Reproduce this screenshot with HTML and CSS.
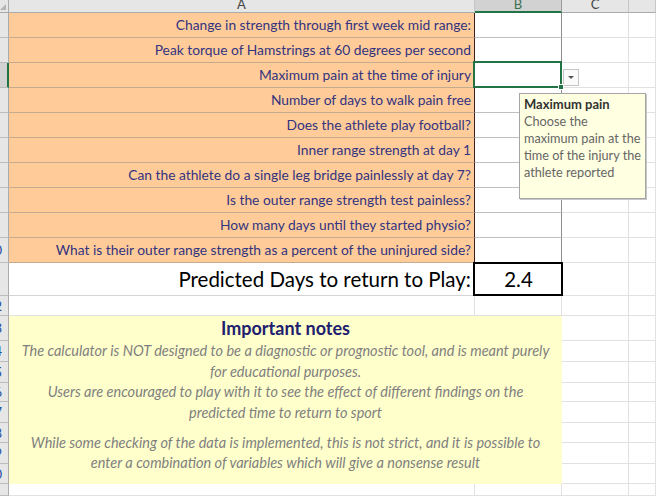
FILE: index.html
```html
<!DOCTYPE html>
<html>
<head>
<meta charset="utf-8">
<link rel="stylesheet" href="styles.css">
</head>
<body>
<div class="sheet">
  <div class="corner"></div>
  <div class="ch">A</div><div class="ch ch-sel">B</div><div class="ch">C</div><div class="ch"></div>

  <div class="rh"></div><div class="q">Change in strength through first week mid range:</div><div class="in"></div><div class="g"></div><div class="g"></div>
  <div class="rh"></div><div class="q">Peak torque of Hamstrings at 60 degrees per second</div><div class="in"></div><div class="g"></div><div class="g"></div>
  <div class="rh rh-sel"></div><div class="q">Maximum pain at the time of injury</div><div class="in active"><span class="dd"></span></div><div class="g"></div><div class="g"></div>
  <div class="rh"></div><div class="q">Number of days to walk pain free</div><div class="in"></div><div class="g"></div><div class="g"></div>
  <div class="rh"></div><div class="q">Does the athlete play football?</div><div class="in"></div><div class="g"></div><div class="g"></div>
  <div class="rh"></div><div class="q">Inner range strength at day 1</div><div class="in"></div><div class="g"></div><div class="g"></div>
  <div class="rh"></div><div class="q">Can the athlete do a single leg bridge painlessly at day 7?</div><div class="in"></div><div class="g"></div><div class="g"></div>
  <div class="rh"></div><div class="q">Is the outer range strength test painless?</div><div class="in"></div><div class="g"></div><div class="g"></div>
  <div class="rh"></div><div class="q">How many days until they started physio?</div><div class="in"></div><div class="g"></div><div class="g"></div>
  <div class="rh"><span class="n">10</span></div><div class="q">What is their outer range strength as a percent of the uninjured side?</div><div class="in"></div><div class="g"></div><div class="g"></div>

  <div class="rh"></div><div class="pred">Predicted Days to return to Play:</div><div class="res">2.4</div><div class="g"></div><div class="g"></div>
  <div class="rh"><span class="n">12</span></div><div class="g"></div><div class="g"></div><div class="g"></div><div class="g"></div>

  <div class="rh"><span class="n">13</span></div>
  <div class="notes">
    <div class="notes-title">Important notes</div>
    <p>The calculator is NOT designed to be a diagnostic or prognostic tool, and is meant purely<br>for educational purposes.</p>
    <p>Users are encouraged to play with it to see the effect of different findings on the<br>predicted time to return to sport</p>
    <p class="gap">While some checking of the data is implemented, this is not strict, and it is possible to<br>enter a combination of variables which will give a nonsense result</p>
  </div>
  <div class="g"></div><div class="g"></div>
  <div class="rh"><span class="n">14</span></div><div class="g"></div><div class="g"></div>
  <div class="rh"><span class="n">15</span></div><div class="g"></div><div class="g"></div>
  <div class="rh"><span class="n">16</span></div><div class="g"></div><div class="g"></div>
  <div class="rh"><span class="n">17</span></div><div class="g"></div><div class="g"></div>
  <div class="rh"><span class="n">18</span></div><div class="g"></div><div class="g"></div>
  <div class="rh"><span class="n">19</span></div><div class="g"></div><div class="g"></div>
  <div class="rh"><span class="n">20</span></div><div class="g"></div><div class="g"></div>
  <div class="rh"></div><div class="g"></div><div class="g"></div><div class="g"></div><div class="g"></div>

  <div class="tip">
    <div class="tip-title">Maximum pain</div>
    <div class="tip-body">Choose the<br>maximum pain at the<br>time of the injury the<br>athlete reported</div>
  </div>
</div>
</body>
</html>
```
FILE: styles.css
```css
html, body {
  margin: 0;
  padding: 0;
}
body {
  width: 656px;
  height: 496px;
  overflow: hidden;
  background: #fff;
  font-family: Lato, "Open Sans", sans-serif;
}
.sheet {
  position: relative;
  display: grid;
  grid-template-columns: 9px 466px 87px 67px 1fr;
  grid-template-rows: 13px repeat(10, 25px) 33px 20px 25px 21px 21px 19px 21px 20px 21px 20px 1fr;
  height: 496px;
}
.sheet > div {
  box-sizing: border-box;
}
.corner {
  position: relative;
  background: #e6e6e6;
  border-right: 1px solid #ababab;
  border-bottom: 1px solid #ababab;
}
.corner::after {
  content: "";
  position: absolute;
  right: 2px;
  bottom: 2px;
  border-left: 6px solid transparent;
  border-bottom: 6px solid #b4b4b4;
}
.ch {
  background: #e6e6e6;
  border-right: 1px solid #c6c6c6;
  border-bottom: 1px solid #ababab;
  color: #444;
  font-size: 13px;
  line-height: 9px;
  text-align: center;
  overflow: hidden;
}
.ch-sel {
  background: #d2d2d2;
  border-right-color: #9a9a9a;
  border-bottom: 2px solid #217346;
  color: #3c6e50;
}
.rh {
  background: #e6e6e6;
  border-right: 1px solid #ababab;
  border-bottom: 1px solid #bcbcbc;
  overflow: hidden;
  display: flex;
  align-items: center;
  justify-content: flex-end;
}
.rh-sel {
  background: #d2d2d2;
  border-right: 2px solid #217346;
}
.rh .n {
  flex: none;
  font-size: 13px;
  color: #1f4e9e;
  margin-right: 6px;
  white-space: nowrap;
}
.q {
  background: #ffcc99;
  border-right: 1px solid #3d1f1f;
  border-bottom: 1px solid #c4aa8f;
  color: #33337f;
  font-size: 13.8px;
  line-height: 24px;
  text-align: right;
  padding-right: 3px;
  white-space: nowrap;
}
.in {
  background: #fff;
  border-right: 1px solid #8c8c8c;
  border-bottom: 1px solid #c0c0c0;
}
.g {
  border-right: 1px solid #e1e1e1;
  border-bottom: 1px solid #e1e1e1;
}
.active {
  position: relative;
}
.active::before {
  content: "";
  position: absolute;
  left: -2px;
  top: -2px;
  right: -1px;
  bottom: -1px;
  border: 2px solid #217346;
}
.active::after {
  content: "";
  position: absolute;
  right: -3px;
  bottom: -3px;
  width: 4px;
  height: 4px;
  background: #217346;
  border: 1px solid #fff;
}
.dd {
  position: absolute;
  left: 88px;
  top: 6px;
  width: 16px;
  height: 17px;
  box-sizing: border-box;
  background: #fafafa;
  border: 1px solid #c6c6c6;
}
.dd::after {
  content: "";
  position: absolute;
  left: 4px;
  top: 6px;
  border-left: 3px solid transparent;
  border-right: 3px solid transparent;
  border-top: 3px solid #555;
}
.pred {
  border-right: 1px solid #e1e1e1;
  border-bottom: 1px solid #d4d4d4;
  color: #000;
  font-size: 20.5px;
  line-height: 32px;
  text-align: right;
  padding-right: 3px;
  white-space: nowrap;
}
.res {
  position: relative;
  color: #000;
  font-size: 20.5px;
  line-height: 32px;
  text-align: center;
  border-bottom: 1px solid #d4d4d4;
}
.res::after {
  content: "";
  position: absolute;
  left: -2px;
  top: -1px;
  right: -1px;
  bottom: -1px;
  border: 2px solid #000;
}
.notes {
  grid-column: span 2;
  grid-row: span 8;
  background: #ffffcc;
  text-align: center;
  color: #7f7f7f;
  font-style: italic;
  font-size: 14.5px;
  line-height: 20.5px;
}
.notes-title {
  color: #20206e;
  font-style: normal;
  font-weight: bold;
  font-size: 18px;
  line-height: 25px;
}
.notes p {
  margin: 0;
  white-space: nowrap;
}
.notes p.gap {
  margin-top: 9.5px;
}
.tip {
  position: absolute;
  left: 519px;
  top: 93px;
  width: 127px;
  height: 106px;
  box-sizing: border-box;
  background: #ffffe1;
  border: 1px solid #a5a5a5;
  box-shadow: 1px 1px 0 #c8c8c8;
  padding: 2px 4px;
  font-size: 12.7px;
  line-height: 17px;
  white-space: nowrap;
}
.tip-title {
  color: #333;
  font-weight: bold;
  font-size: 13px;
}
.tip-body {
  color: #666;
}
```
